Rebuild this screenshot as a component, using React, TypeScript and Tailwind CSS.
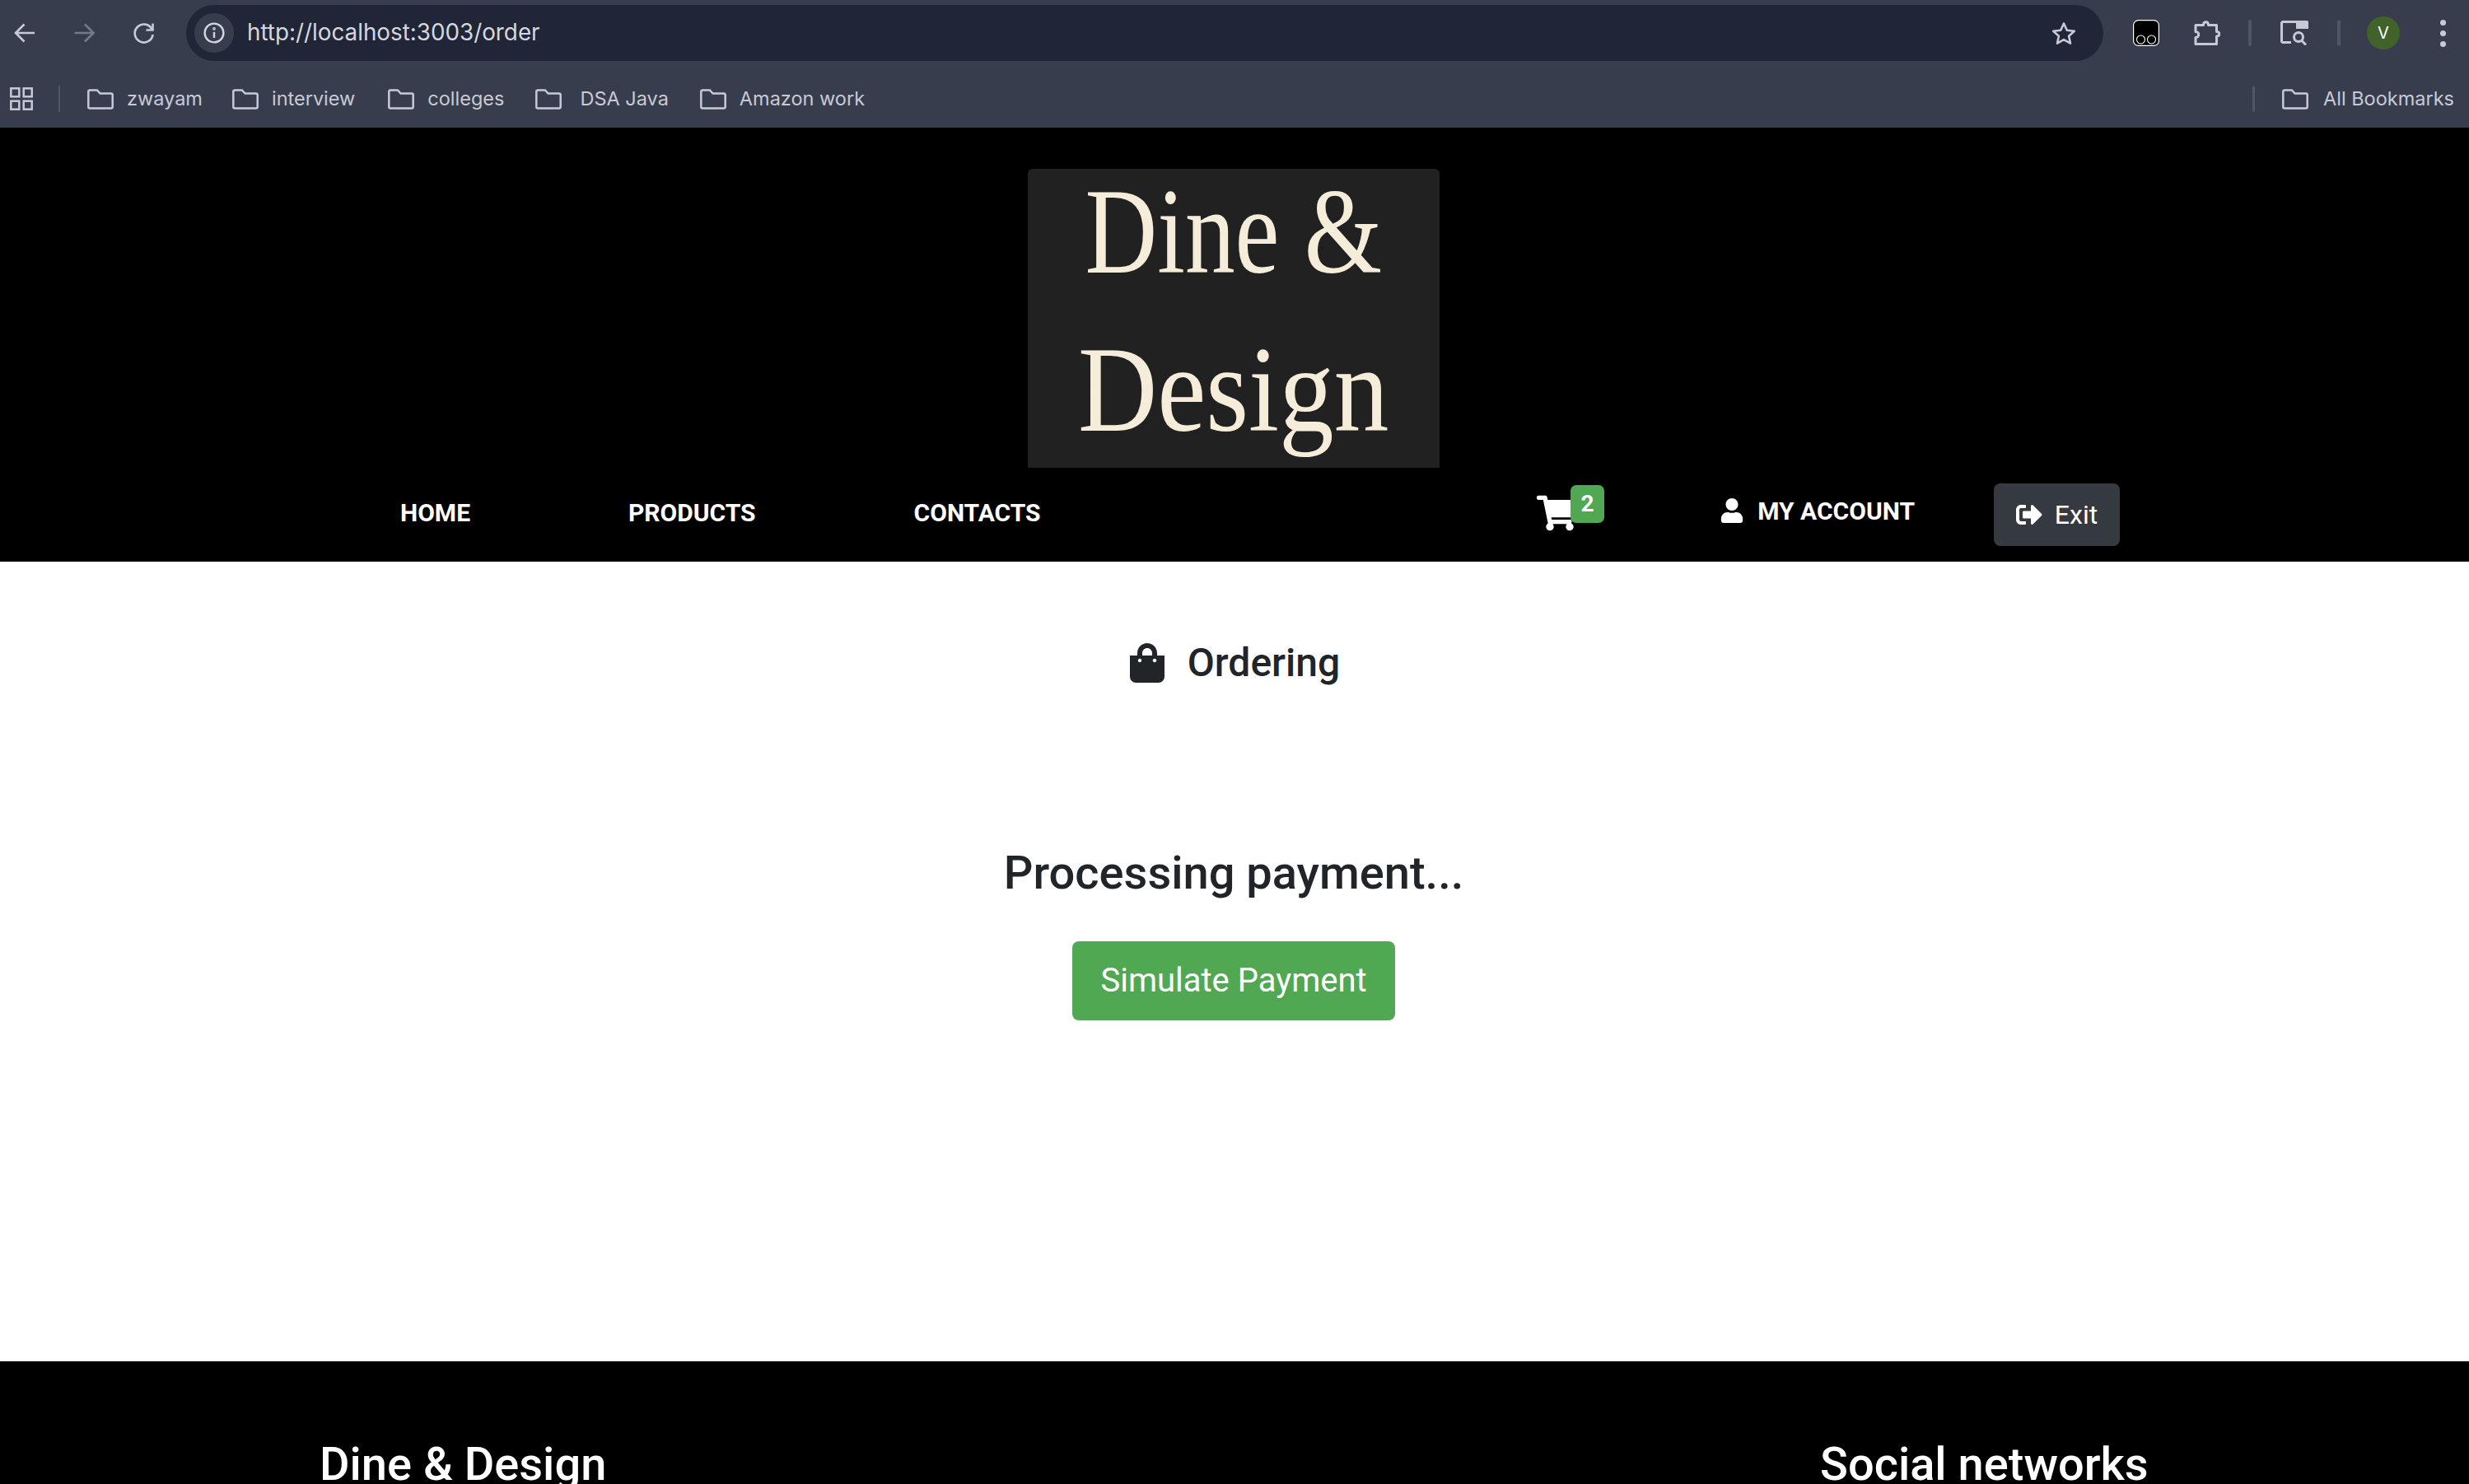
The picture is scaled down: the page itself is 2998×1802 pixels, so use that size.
import { FaShoppingBag, FaShoppingCart, FaSignOutAlt, FaUser } from 'react-icons/fa'

const bookmarks = [
  { label: 'zwayam', iconGap: 'gap-[16px]', gap: 'mr-[36px]' },
  { label: 'interview', iconGap: 'gap-[16px]', gap: 'mr-[40px]' },
  { label: 'colleges', iconGap: 'gap-[16px]', gap: 'mr-[38px]' },
  { label: 'DSA Java', iconGap: 'gap-[22px]', gap: 'mr-[38px]' },
  { label: 'Amazon work', iconGap: 'gap-[16px]', gap: '' },
]

function Folder() {
  return (
    <svg viewBox="0 0 32 25" className="w-[32px] h-[25px] shrink-0 fill-none stroke-[#c7cad6] stroke-[2.5]">
      <path d="M3 1.5h9l3.5 4H29a1.7 1.7 0 0 1 1.7 1.7v14.6a1.7 1.7 0 0 1-1.7 1.7H3a1.7 1.7 0 0 1-1.7-1.7V3.2A1.7 1.7 0 0 1 3 1.5z" strokeLinejoin="round" />
    </svg>
  )
}

function BrowserChrome() {
  return (
    <div className="h-[155px] shrink-0 bg-[#383d4d] font-['Inter',sans-serif]">
      <div className="h-[80px] flex items-center pl-[17px]">
        <svg viewBox="0 0 25 24" className="w-[25px] h-[24px] shrink-0 fill-none stroke-[#c7cad6] stroke-[2.6]">
          <path d="M25 12H2M12.5 1.5 2 12l10.5 10.5" />
        </svg>
        <svg viewBox="0 0 25 24" className="w-[26px] h-[24px] ml-[48px] shrink-0 fill-none stroke-[#747987] stroke-[2.6]">
          <path d="M0 12h23M12.5 1.5 23 12 12.5 22.5" />
        </svg>
        <svg viewBox="0 0 27 27" className="w-[27px] h-[27px] ml-[45px] shrink-0 fill-none stroke-[#c7cad6] stroke-[2.6]">
          <path d="M23.5 8.5A11 11 0 1 0 24.6 15" />
          <path d="M24.5 1.5v8h-8" />
        </svg>
        <div className="w-[2328px] h-[68px] ml-[38px] shrink-0 rounded-full bg-[#202637] flex items-center pl-[10px]">
          <div className="w-[48px] h-[48px] rounded-full bg-[#383d4d] flex items-center justify-center">
            <svg viewBox="0 0 24 24" className="w-[26px] h-[26px] fill-none stroke-[#d3d5de] stroke-[2.2]">
              <circle cx="12" cy="12" r="10.5" />
              <path d="M12 11v6.5" />
              <circle cx="12" cy="7.2" r="0.6" />
            </svg>
          </div>
          <span className="ml-[16px] text-[27.8px] text-[#d5d7df]">http://localhost:3003/order</span>
          <svg viewBox="0 0 30 29" className="w-[30px] h-[29px] ml-auto mr-[33px] fill-none stroke-[#c7cad6] stroke-[2.6]">
            <path d="m15 2.5 3.8 8.3 9 1-6.7 6 1.9 8.9-8-4.6-8 4.6 1.9-8.9-6.7-6 9-1z" strokeLinejoin="round" />
          </svg>
        </div>
        <svg viewBox="0 0 32 32" className="w-[32px] h-[32px] ml-[36px] shrink-0">
          <rect x="0.6" y="0.6" width="30.8" height="30.8" rx="6" fill="#000" stroke="#fff" strokeWidth="1.2" />
          <circle cx="9.5" cy="24" r="5" fill="none" stroke="#fff" strokeWidth="1.1" />
          <circle cx="22.5" cy="24" r="5" fill="none" stroke="#fff" strokeWidth="1.1" />
        </svg>
        <svg viewBox="0 0 32 32" className="w-[32px] h-[32px] ml-[42px] shrink-0 fill-none stroke-[#c7cad6] stroke-[3]">
          <path d="M2 6.5h9.5c0-5 6-5 6 0H27.5v8c4.500 0 4.500 5.500 0 5.500v9.500H2v-8c5 0 5-7 0-7z" strokeLinejoin="round" />
        </svg>
        <div className="w-[4px] h-[32px] ml-[34px] shrink-0 rounded-full bg-[#4f5466]" />
        <svg viewBox="0 0 34 30" className="w-[34px] h-[30px] ml-[35px] shrink-0 fill-none stroke-[#c7cad6] stroke-[3]">
          <path d="M19 1.500H3a1.500 1.500 0 0 0-1.500 1.500v22A1.500 1.500 0 0 0 3 26.500h10" />
          <path d="M19 0h13a2 2 0 0 1 2 2v8H19z" fill="#c7cad6" stroke="none" />
          <circle cx="22" cy="20" r="5.500" />
          <path d="m26 24.500 5 5" />
        </svg>
        <div className="w-[4px] h-[32px] ml-[35px] shrink-0 rounded-full bg-[#4f5466]" />
        <div className="w-[40px] h-[40px] ml-[32px] shrink-0 rounded-full bg-[#41632a] flex items-center justify-center text-[20px] text-white">V</div>
        <div className="ml-[49px] flex flex-col gap-[6px] shrink-0">
          <div className="w-[7px] h-[7px] rounded-full bg-[#c7cad6]" />
          <div className="w-[7px] h-[7px] rounded-full bg-[#c7cad6]" />
          <div className="w-[7px] h-[7px] rounded-full bg-[#c7cad6]" />
        </div>
      </div>
      <div className="h-[75px] pt-[5px] flex items-center pl-[12px] text-[23.5px] text-[#c7cad6]">
        <svg viewBox="0 0 28 28" className="w-[28px] h-[28px] shrink-0 fill-none stroke-[#c7cad6] stroke-[2.5]">
          <rect x="1.300" y="1.300" width="10" height="10" />
          <rect x="16.700" y="1.300" width="10" height="10" />
          <rect x="1.300" y="16.700" width="10" height="10" />
          <rect x="16.700" y="16.700" width="10" height="10" />
        </svg>
        <div className="w-[2px] h-[32px] ml-[31px] mr-[33px] shrink-0 bg-[#4f5466]" />
        {bookmarks.map((b) => (
          <div key={b.label} className={`flex items-center ${b.iconGap} ${b.gap}`}>
            <Folder />
            <span>{b.label}</span>
          </div>
        ))}
        <div className="w-[3px] h-[32px] ml-auto mr-[33px] shrink-0 rounded-full bg-[#4f5466]" />
        <div className="flex items-center gap-[18px] mr-[18px]">
          <Folder />
          <span>All Bookmarks</span>
        </div>
      </div>
    </div>
  )
}

function Header() {
  return (
    <header className="h-[527px] shrink-0 bg-black pt-[50px] text-white">
      <div className="w-[500px] h-[363px] ml-[1248px] rounded-t-[6px] bg-[#212121] overflow-hidden flex flex-col items-center font-['Liberation_Serif',serif] text-[148px] leading-[192px] text-[#f5edd9]">
        <div className="-mt-[20px] scale-x-[0.82]">Dine &amp;</div>
        <div className="scale-x-[0.9]">Design</div>
      </div>
      <nav className="h-[114px] flex items-center pl-[486px] pr-[424px] font-['Roboto',sans-serif] font-bold text-[30px]">
        <a className="mb-[6px]">HOME</a>
        <a className="ml-[192px] mb-[6px]">PRODUCTS</a>
        <a className="ml-[192px] mb-[6px]">CONTACTS</a>
        <div className="ml-auto relative w-[82px] h-[81px]">
          <FaShoppingCart className="absolute left-0 top-[14px] text-[48px]" />
          <span className="absolute right-0 top-[4px] w-[41px] h-[46px] rounded-[7px] bg-[#51a853] flex items-center justify-center text-[28px]">2</span>
        </div>
        <a className="ml-[140px] mb-[10px] flex items-center gap-[16px]">
          <FaUser className="text-[30px]" />
          MY ACCOUNT
        </a>
        <button className="ml-[96px] w-[153px] h-[76px] rounded-[8px] bg-[#343a40] flex items-center justify-center gap-[15px] font-normal text-[32px]">
          <FaSignOutAlt className="text-[32px]" />
          Exit
        </button>
      </nav>
    </header>
  )
}

export default function App() {
  return (
    <div className="w-full h-[1802px] flex flex-col overflow-hidden bg-white">
      <BrowserChrome />
      <Header />
      <main className="flex-1 flex flex-col items-center pr-[2px] font-['Roboto',sans-serif] text-[#212529]">
        <h4 className="mt-[94px] flex items-center gap-[25px] text-[48px] leading-[58px] font-medium">
          <FaShoppingBag className="text-[48px]" />
          Ordering
        </h4>
        <h3 className="mt-[193px] text-[56px] leading-[67px] font-medium">Processing payment...</h3>
        <button className="mt-[49px] w-[392px] h-[96px] rounded-[8px] bg-[#51a853] text-white text-[40px]">Simulate Payment</button>
      </main>
      <footer className="h-[149px] shrink-0 bg-black pt-[92px] pl-[388px] flex font-['Roboto',sans-serif] font-medium text-[56px] leading-[67px] text-white">
        <h3 className="w-[1822px]">Dine &amp; Design</h3>
        <h3>Social networks</h3>
      </footer>
    </div>
  )
}
